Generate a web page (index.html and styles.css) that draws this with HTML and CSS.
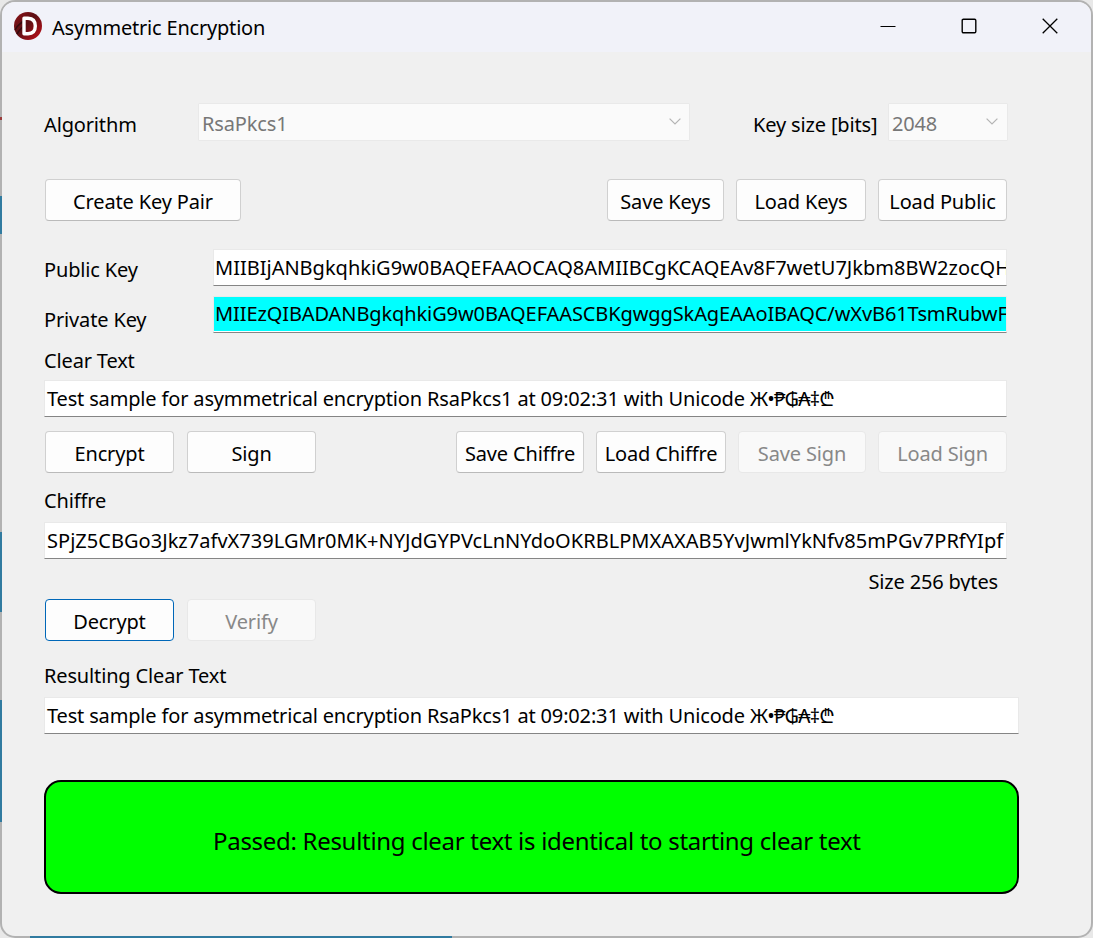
FILE: index.html
```
<!DOCTYPE html>
<html lang="en">
<head>
<meta charset="utf-8">
<title>Asymmetric Encryption</title>
<link rel="stylesheet" href="styles.css">
</head>
<body>
<main class="window">
  <header class="titlebar">
    <svg class="logo" viewBox="0 0 28 28" aria-hidden="true">
      <defs><linearGradient id="red" x1="0" y1="0" x2="1" y2="1"><stop offset="0" stop-color="#8e1218"/><stop offset=".45" stop-color="#5c1014"/><stop offset="1" stop-color="#c8101a"/></linearGradient></defs>
      <circle cx="14" cy="14" r="14" fill="url(#red)"/>
      <path d="M1 18C4 12 6 13 9 9M3 22C6 16 8 17 10 13" fill="none" stroke="#35090c" stroke-width="1.5"/>
      <path d="M10 6.2H14Q21.3 6.6 21.3 14T14 21.8H10Z" fill="none" stroke="#fff" stroke-width="3.4" stroke-linejoin="round"/>
    </svg>
    <h1 class="title">Asymmetric Encryption</h1>
    <div class="controls">
      <svg class="control" viewBox="0 0 16 16"><path d="M.5 8.5H15.5" stroke="#000"/></svg>
      <svg class="control" viewBox="0 0 16 16"><rect x="1.2" y="1.2" width="13.6" height="13.6" rx="1.2" fill="none" stroke="#000" stroke-width="1.4"/></svg>
      <svg class="control" viewBox="0 0 16 16"><path d="M.7.7 15.3 15.3M15.3.7.7 15.3" stroke="#000" stroke-width="1.3"/></svg>
    </div>
  </header>
  <section class="form">
    <div class="row row-algorithm">
      <span class="label label-algorithm">Algorithm</span>
      <div class="select select-algorithm"><span>RsaPkcs1</span><svg class="chevron" viewBox="0 0 12 7"><path d="M.6.6 6 6 11.4.6"/></svg></div>
      <span class="label label-keysize">Key size [bits]</span>
      <div class="select select-keysize"><span>2048</span><svg class="chevron" viewBox="0 0 12 7"><path d="M.6.6 6 6 11.4.6"/></svg></div>
    </div>
    <div class="row row-keys">
      <button class="button w196"><span>Create Key Pair</span></button>
      <div class="group">
        <button class="button w117"><span>Save Keys</span></button>
        <button class="button w130"><span>Load Keys</span></button>
        <button class="button w129"><span>Load Public</span></button>
      </div>
    </div>
    <div class="row row-public">
      <span class="label label-key">Public Key</span>
      <div class="field"><span class="text-public">MIIBIjANBgkqhkiG9w0BAQEFAAOCAQ8AMIIBCgKCAQEAv8F7wetU7Jkbm8BW2zocQH</span></div>
    </div>
    <div class="row row-private">
      <span class="label label-key label-private">Private Key</span>
      <div class="field field-secret"><span class="text-private">MIIEzQIBADANBgkqhkiG9w0BAQEFAASCBKgwggSkAgEAAoIBAQC/wXvB61TsmRubwF</span></div>
    </div>
    <div class="label label-clear">Clear Text</div>
    <div class="field field-clear"><span class="text-sample">Test sample for asymmetrical encryption RsaPkcs1 at 09:02:31 with Unicode <span class="symbols">Ж•₱₲₳‡₾</span></span></div>
    <div class="row row-encrypt">
      <div class="group">
        <button class="button w129"><span>Encrypt</span></button>
        <button class="button w129"><span>Sign</span></button>
      </div>
      <div class="group">
        <button class="button w128"><span>Save Chiffre</span></button>
        <button class="button w130"><span>Load Chiffre</span></button>
        <button class="button w128" disabled><span>Save Sign</span></button>
        <button class="button w129" disabled><span>Load Sign</span></button>
      </div>
    </div>
    <div class="label label-chiffre">Chiffre</div>
    <div class="field field-chiffre"><span class="text-chiffre">SPjZ5CBGo3Jkz7afvX739LGMr0MK+NYJdGYPVcLnNYdoOKRBLPMXAXAB5YvJwmlYkNfv85mPGv7PRfYIpf</span></div>
    <div class="label size">Size 256 bytes</div>
    <div class="row row-decrypt">
      <div class="group">
        <button class="button button-default w129"><span>Decrypt</span></button>
        <button class="button w129" disabled><span>Verify</span></button>
      </div>
    </div>
    <div class="label label-result">Resulting Clear Text</div>
    <div class="field field-result"><span class="text-sample">Test sample for asymmetrical encryption RsaPkcs1 at 09:02:31 with Unicode <span class="symbols">Ж•₱₲₳‡₾</span></span></div>
    <div class="status"><span class="status-text">Passed: Resulting clear text is identical to starting clear text</span></div>
  </section>
</main>
</body>
</html>
```
FILE: styles.css
```
* { box-sizing: border-box; }
body {
  margin: 0; height: 938px; overflow: hidden; padding: 2px;
  font: 20px/28px "Noto Sans", "Open Sans", sans-serif; color: #000;
  letter-spacing: -0.15px;
  background:
    linear-gradient(#c9504d, #c9504d) 0 117px / 2px 3px no-repeat,
    linear-gradient(#40a0d0, #40a0d0) 0 196px / 2px 38px no-repeat,
    linear-gradient(#40a0d0, #40a0d0) 0 532px / 2px 80px no-repeat,
    linear-gradient(#40a0d0, #40a0d0) 0 700px / 2px 122px no-repeat,
    linear-gradient(#40a0d0, #40a0d0) 30px 936px / 422px 2px no-repeat,
    #e8e8e8;
}
.window {
  width: 1089px; height: 934px; border-radius: 13px; overflow: hidden;
  background: #f0f0f0; box-shadow: 0 0 0 2px rgba(0,0,0,.23);
}
.titlebar { height: 50px; display: flex; align-items: center; padding: 0 33px 2px 12px; background: #f1f2f9; }
.logo { width: 28px; height: 28px; }
.title { margin: 3px 0 0 10px; font-size: 20px; font-weight: 400; letter-spacing: -.2px; }
.controls { margin-left: auto; display: flex; gap: 65px; }
.control { width: 16px; height: 16px; }
.form { padding: 51px 0 0 42px; width: 1005px; }
.row { display: flex; align-items: center; }
.group { display: flex; gap: 12px; }
.label { white-space: nowrap; display: block; flex: none; }
.row-algorithm { height: 38px; }
.label-algorithm { width: 154px; padding-top: 5px; }
.select { height: 38px; border: 1px solid #e9e9e9; border-radius: 1px; background: #fafafa; color: #777; display: flex; align-items: center; justify-content: space-between; padding: 2px 8px 0 3px; flex: none; }
.select span { padding-top: 2px; }
.select-algorithm { width: 492px; }
.select-keysize { width: 120px; padding-right: 9px; }
.label-keysize { width: 135px; margin: 5px 0 0 63px; }
.chevron { width: 12px; height: 7px; margin-bottom: 3px; fill: none; stroke: #b5b5b5; stroke-width: 1.2; }
.button {
  height: 42px; padding: 3px 0 0; border: 1px solid #d0d0d0; border-bottom-color: #bababa; border-radius: 4px;
  background: #fdfdfd; color: #000; font: inherit; letter-spacing: inherit; white-space: nowrap;
}
.button:disabled { background: #f9f9f9; border-color: #e8e8e8; color: #888; }
.button-default { border-color: #0067b8; }
.w196 { width: 196px; } .w117 { width: 117px; } .w128 { width: 128px; } .w129 { width: 129px; } .w130 { width: 130px; }
.row-keys { height: 42px; margin: 38px 0 0 1px; justify-content: space-between; }
.row-keys, .row-encrypt { width: 962px; }
.row-public { margin-top: 28px; }
.row-private { margin-top: 10px; height: 37px; }
.label-key { width: 169px; padding-top: 4px; }
.label-private { padding-top: 11px; }
.field { width: 963px; height: 37px; border: 1px solid #e9e9e9; border-bottom-color: #858585; background: #fff; padding: 4px 2px 0; overflow: hidden; white-space: nowrap; }
.row .field { width: 794px; padding-left: 1px; }
.field-secret { padding-top: 3px; background: linear-gradient(#0ff, #0ff) 0 0 / 100% 34px no-repeat, #fff; }
.text-public { letter-spacing: 0; }
.text-private { letter-spacing: -.1px; }
.text-sample { letter-spacing: -.16px; }
.text-chiffre { letter-spacing: .03px; }
.symbols { letter-spacing: -.8px; }
.label-clear { margin-top: 14px; }
.field-clear { margin-top: 5px; }
.row-encrypt { margin: 14px 0 0 1px; justify-content: space-between; }
.row-encrypt .group:first-child, .row-decrypt .group { gap: 13px; }
.label-chiffre { margin-top: 14px; }
.field-chiffre { margin-top: 7px; }
.size { width: 954px; height: 23px; margin-top: 9px; overflow: hidden; text-align: right; }
.row-decrypt { margin: 8px 0 0 1px; }
.label-result { margin-top: 21px; }
.field-result { width: 975px; margin-top: 7px; }
.status { width: 975px; height: 114px; margin-top: 46px; border: 2px solid #000; border-radius: 17px; background: #0f0; display: flex; padding: 44px 0 0 167px; }
.status-text { font-size: 24px; line-height: 30px; letter-spacing: -.3px; white-space: nowrap; }
```
